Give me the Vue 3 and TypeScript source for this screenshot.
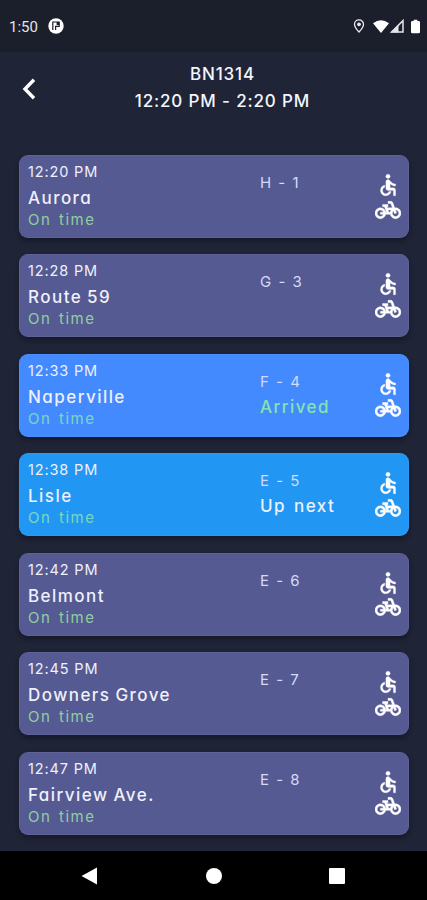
<script setup lang="ts">
interface Stop {
  time: string
  name: string
  track: string
  state?: 'arrived' | 'next'
  note?: string
}

const stops: Stop[] = [
  { time: '12:20 PM', name: 'Aurora', track: 'H - 1' },
  { time: '12:28 PM', name: 'Route 59', track: 'G - 3' },
  { time: '12:33 PM', name: 'Naperville', track: 'F - 4', state: 'arrived', note: 'Arrived' },
  { time: '12:38 PM', name: 'Lisle', track: 'E - 5', state: 'next', note: 'Up next' },
  { time: '12:42 PM', name: 'Belmont', track: 'E - 6' },
  { time: '12:45 PM', name: 'Downers Grove', track: 'E - 7' },
  { time: '12:47 PM', name: 'Fairview Ave.', track: 'E - 8' },
]
</script>

<template>
  <div class="screen">
    <div class="status">
      <span class="clock">1:50</span>
      <svg class="app-badge" viewBox="0 0 16 16">
        <circle cx="8" cy="8" r="7.7" fill="#fff" />
        <path d="M4.800 12V4h6.400v4.300H7.600V12" fill="none" stroke="#1b1e2b" stroke-width="1.200" />
        <path d="M8.600 4h2.600v3H8.600z" fill="#1b1e2b" />
      </svg>
      <span class="grow"></span>
      <svg class="pin" viewBox="0 0 12 14">
        <path d="M6 .9C3.4.9 1.5 2.8 1.5 5.3 1.5 8.4 6 13 6 13s4.5-4.6 4.5-7.7C10.500 2.800 8.600.9 6 .9z" fill="none" stroke="#e8e8ec" stroke-width="1.3" />
        <circle cx="6" cy="5.300" r="1.900" fill="#e8e8ec" />
      </svg>
      <svg class="wifi" viewBox="0 0 16 13"><path d="M8 13 0 3.200Q8-2.800 16 3.200z" fill="#fff" /></svg>
      <svg class="signal" viewBox="0 0 14 14">
        <path d="M13 1.600V13H1.600z" fill="none" stroke="#e6e6ea" stroke-width="1.500" />
        <path d="M1 13.500 8.500 6v7.500z" fill="#e6e6ea" />
      </svg>
      <svg class="battery" viewBox="0 0 10 15"><path d="M3 0h4v1.500h1.500Q10 1.500 10 3v10.500Q10 15 8.500 15h-7Q0 15 0 13.500V3Q0 1.500 1.500 1.500H3z" fill="#fff" /></svg>
    </div>

    <header class="header">
      <svg class="back" viewBox="0 0 14 22"><path d="M12 1.800 3 11l9 9.200" fill="none" stroke="#fff" stroke-width="3.400" /></svg>
      <div class="titles">
        <div class="train">BN1314</div>
        <div class="span">12:20 PM - 2:20 PM</div>
      </div>
    </header>

    <main class="list">
      <article v-for="s in stops" :key="s.name" class="card" :class="s.state">
        <div class="left">
          <div class="time">{{ s.time }}</div>
          <div class="name">{{ s.name }}</div>
          <div class="punctual">On time</div>
        </div>
        <div class="mid">
          <div class="track">{{ s.track }}</div>
          <div v-if="s.note" class="note">{{ s.note }}</div>
        </div>
        <div class="amenities">
          <svg viewBox="0 0 24 24">
            <circle cx="12" cy="4" r="2" />
            <path d="M19 13v-2c-1.540.02-3.090-.75-4.070-1.830l-1.290-1.430c-.17-.19-.38-.34-.61-.45-.01 0-.01-.01-.02-.01H13c-.35-.2-.75-.3-1.190-.26C10.760 7.110 10 8.040 10 9.090V15c0 1.100.9 2 2 2h5v5h2v-5.500c0-1.100-.9-2-2-2h-3v-3.450c1.290 1.070 3.250 1.940 5 1.950zm-6.170 5c-.41 1.160-1.520 2-2.830 2-1.660 0-3-1.340-3-3 0-1.310.84-2.410 2-2.830V12.100c-2.280.46-4 2.480-4 4.900 0 2.760 2.240 5 5 5 2.420 0 4.440-1.720 4.900-4h-2.070z" />
          </svg>
          <svg viewBox="0 0 24 24">
            <path d="M18.180 10l-1.700-4.680C16.190 4.530 15.440 4 14.600 4H12v2h2.600l1.460 4h-4.810l-.36-1H12V7H7v2h1.750l1.820 5H9.900c-.44-2.230-2.310-3.880-4.650-3.990C2.450 9.870 0 12.200 0 15c0 2.800 2.200 5 5 5 2.460 0 4.450-1.690 4.900-4h4.200c.44 2.230 2.310 3.880 4.650 3.990 2.800.13 5.250-2.190 5.250-5 0-2.800-2.200-5-5-5h-.82zM7.820 16c-.4 1.170-1.490 2-2.820 2-1.680 0-3-1.320-3-3s1.320-3 3-3c1.330 0 2.420.83 2.820 2H5v2h2.820zm6.280-2h-1.400l-.73-2H15c-.44.58-.76 1.250-.9 2zm4.900 4c-1.680 0-3-1.320-3-3 0-.93.41-1.730 1.050-2.280l.96 2.640 1.880-.68-.97-2.670c.03 0 .06-.01.08-.01 1.680 0 3 1.320 3 3s-1.320 3-3 3z" />
          </svg>
        </div>
      </article>
    </main>

    <nav class="navbar">
      <svg viewBox="0 0 18 18"><path d="M16 .5v17L.5 9z" /></svg>
      <svg viewBox="0 0 18 18"><circle cx="9" cy="9" r="8" /></svg>
      <svg viewBox="0 0 18 18"><rect x="1" y="1" width="16" height="16" rx="1" /></svg>
    </nav>
  </div>
</template>

<style>
body {
  margin: 0;
  background: #1f2437;
}
</style>

<style scoped>
.screen {
  display: flex;
  flex-direction: column;
  width: 427px;
  height: 900px;
  overflow: hidden;
  background: #1f2437;
  color: #eef0fb;
  font-family: Inter, 'Open Sans', sans-serif;
  font-feature-settings: 'cv11' 1;
  white-space: nowrap;
}
svg {
  display: block;
  flex: none;
}
.status {
  display: flex;
  align-items: center;
  box-sizing: border-box;
  height: 52px;
  padding: 0 7px 0 9px;
  background: #1b1e2b;
}
.clock {
  width: 39px;
  font: 15px/20px Roboto, sans-serif;
  color: #e4e4e8;
  padding-top: 2px;
}
.app-badge {
  width: 16px;
  height: 16px;
}
.grow {
  flex: 1;
}
.pin {
  width: 12px;
  height: 14px;
  margin-right: 8px;
}
.wifi {
  width: 16px;
  height: 13px;
  margin-right: 1px;
}
.signal {
  width: 14px;
  height: 14px;
  margin-right: 7px;
}
.battery {
  width: 9px;
  height: 15px;
}
.header {
  display: flex;
  box-sizing: border-box;
  height: 103px;
  padding: 9px 21px 0 22px;
}
.back {
  width: 14px;
  height: 22px;
  margin-top: 17px;
}
.titles {
  flex: 1;
  text-align: center;
  padding-left: 3px;
  color: #f4f5fc;
}
.train,
.span {
  font-size: 17px;
  line-height: 27px;
  font-weight: 500;
  letter-spacing: 0.850px;
}
.list {
  display: flex;
  flex: 1;
  flex-direction: column;
  gap: 16.450px;
  padding: 0 18px 0 19px;
}
.card {
  display: flex;
  flex: none;
  box-sizing: border-box;
  height: 83px;
  padding: 7px 8px 0 9px;
  border-radius: 9px;
  background: #565a92;
  box-shadow: 0 3px 5px rgba(10, 12, 25, 0.45), inset 0 0 0 0.500px rgba(255, 255, 255, 0.1);
}
.card.arrived {
  background: #448aff;
}
.card.next {
  background: #2196f3;
}
.left {
  width: 232px;
}
.time {
  font-size: 14.500px;
  line-height: 20px;
  letter-spacing: 0.850px;
}
.name {
  margin-top: 4px;
  font-size: 17px;
  line-height: 24px;
  font-weight: 500;
  letter-spacing: 1.450px;
  word-spacing: -1px;
}
.punctual {
  font-size: 15px;
  line-height: 19px;
  letter-spacing: 1.500px;
  word-spacing: 2px;
  color: #8fcf9f;
}
.arrived .punctual,
.next .punctual {
  color: #79d9bd;
}
.mid {
  flex: 1;
  padding-top: 11px;
}
.track {
  font-size: 15px;
  line-height: 20px;
  letter-spacing: 1.500px;
  color: #d5dafa;
}
.note {
  margin-top: 2px;
  font-size: 17px;
  line-height: 26px;
  font-weight: 500;
  letter-spacing: 1.450px;
  word-spacing: 2px;
}
.arrived .note {
  color: #84e3af;
}
.amenities {
  padding-top: 10px;
}
.amenities svg {
  width: 26px;
  height: 26px;
  fill: #fff;
  stroke: #fff;
  stroke-width: 0.200px;
}
.amenities svg + svg {
  margin-top: -1.500px;
  stroke-width: 0.400px;
}
.navbar {
  display: flex;
  flex: none;
  justify-content: space-between;
  box-sizing: border-box;
  height: 49px;
  padding: 16px 81px 0 81px;
  background: #000;
}
.navbar svg {
  width: 18px;
  height: 18px;
  fill: #fff;
}
</style>
